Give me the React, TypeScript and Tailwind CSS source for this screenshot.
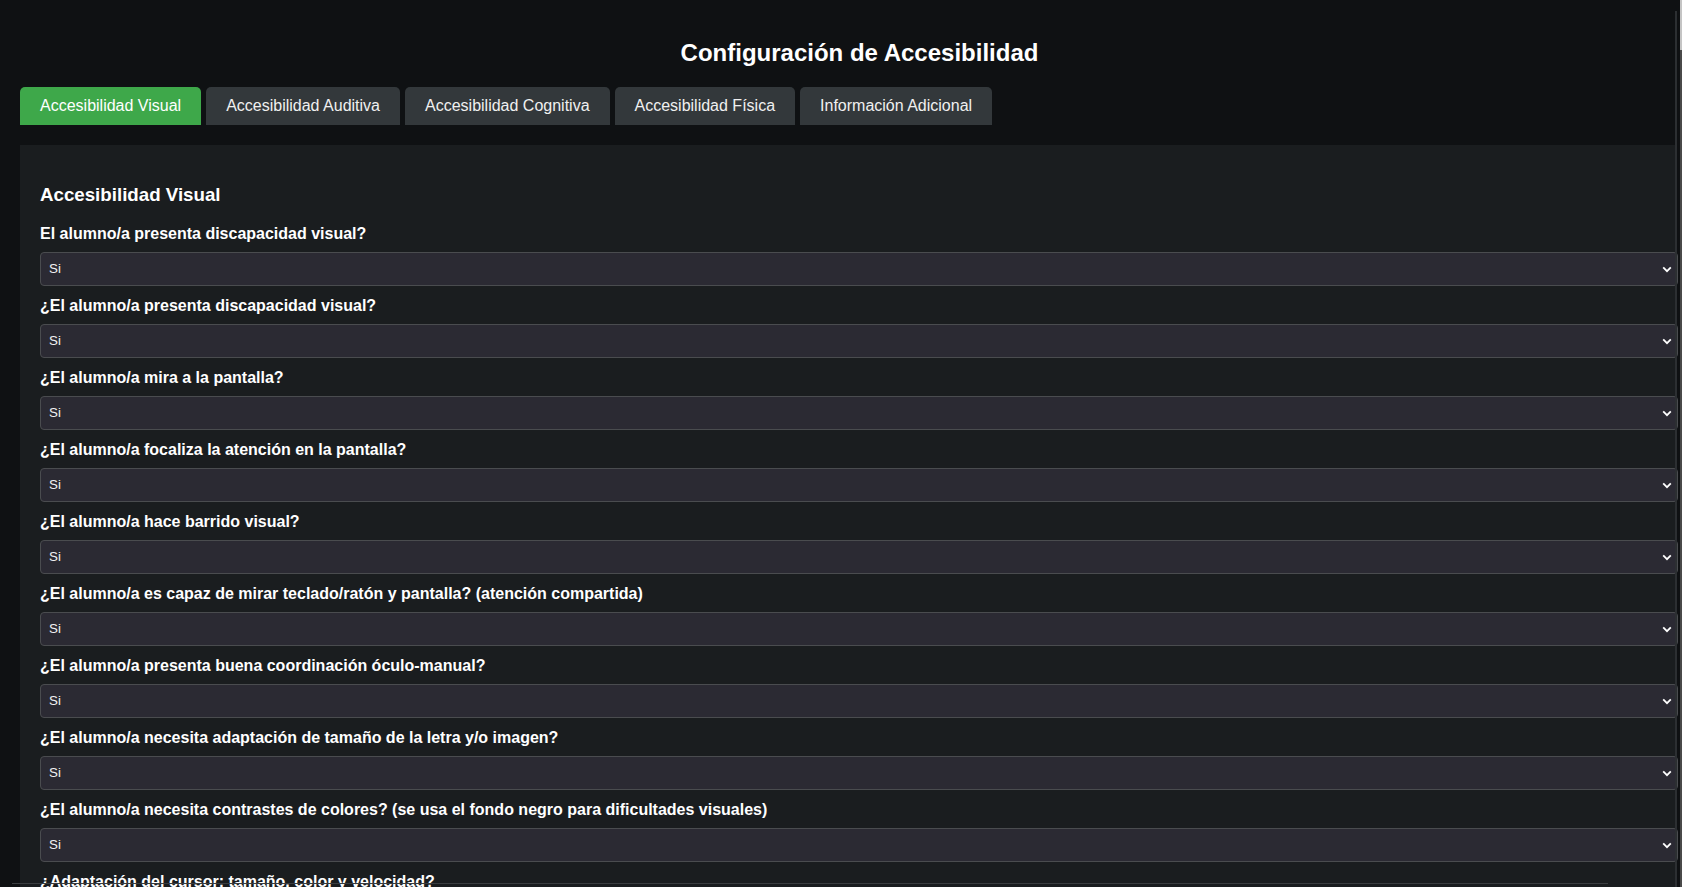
import React from "react";

const questions = [
  "El alumno/a presenta discapacidad visual?",
  "¿El alumno/a presenta discapacidad visual?",
  "¿El alumno/a mira a la pantalla?",
  "¿El alumno/a focaliza la atención en la pantalla?",
  "¿El alumno/a hace barrido visual?",
  "¿El alumno/a es capaz de mirar teclado/ratón y pantalla? (atención compartida)",
  "¿El alumno/a presenta buena coordinación óculo-manual?",
  "¿El alumno/a necesita adaptación de tamaño de la letra y/o imagen?",
  "¿El alumno/a necesita contrastes de colores? (se usa el fondo negro para dificultades visuales)",
  "¿Adaptación del cursor: tamaño, color y velocidad?",
];

const tabs = [
  "Accesibilidad Visual",
  "Accesibilidad Auditiva",
  "Accesibilidad Cognitiva",
  "Accesibilidad Física",
  "Información Adicional",
];

function Select() {
  return (
    <div className="relative w-[1638px] h-[34px]">
      <select
        defaultValue="si"
        className="appearance-none w-full h-full bg-[#2b2a33] border border-[#4a4c4f] rounded-[4px] pl-[8px] text-[13.33px] text-[#f2f2f2] font-['Liberation_Sans',Arial,sans-serif] outline-none"
      >
        <option value="si">Si</option>
        <option value="no">No</option>
      </select>
      <svg
        className="absolute right-[6px] top-[14px] pointer-events-none"
        width="10"
        height="7"
        viewBox="0 0 10 7"
      >
        <path d="M1.2 1.4 L5 5.2 L8.8 1.4" fill="none" stroke="#ffffff" strokeWidth="1.8" />
      </svg>
    </div>
  );
}

export default function App() {
  return (
    <div className="relative w-full h-[887px] overflow-hidden bg-[#0f1113] text-white font-['Liberation_Sans',Arial,sans-serif]">
      <div className="pt-[39px]">
        <h1 className="pl-[37px] text-center text-[24px] leading-[28px] font-bold">
          Configuración de Accesibilidad
        </h1>
        <div className="mt-[20px] ml-[20px] flex gap-[5px]">
          {tabs.map((t, i) => (
            <div
              key={t}
              className={
                i === 0
                  ? "h-[38px] px-5 flex items-center text-[16px] rounded-t-[5px] bg-[#3ea84a] text-white"
                  : "h-[38px] px-5 flex items-center text-[16px] rounded-t-[5px] bg-[#33383b] text-[#f0f0f0]"
              }
            >
              {t}
            </div>
          ))}
        </div>
        <div className="mt-[20px] ml-[20px] w-[1656px] bg-[#1a1d1f] pt-[39px] pl-[20px] pb-[40px]">
          <h3 className="text-[18.72px] leading-[22px] font-bold mb-[19px]">Accesibilidad Visual</h3>
          {questions.map((q) => (
            <div key={q} className="mb-[11px]">
              <label className="block text-[16px] leading-[18px] font-bold mb-[9px]">{q}</label>
              <Select />
            </div>
          ))}
        </div>
      </div>
      {/* scrollbars */}
      <div className="absolute right-[5px] top-[11px] bottom-0 w-[2px] bg-[#2c2f32]" />
      <div className="absolute right-0 top-0 w-[2px] h-[50px] bg-[#c4c4c4]" />
      <div className="absolute right-0 top-[50px] bottom-0 w-[2px] bg-[#4a4a4a]" />
      <div className="absolute left-[12px] top-[883px] w-[1596px] h-[1px] bg-[#3a3d40]" />
    </div>
  );
}
